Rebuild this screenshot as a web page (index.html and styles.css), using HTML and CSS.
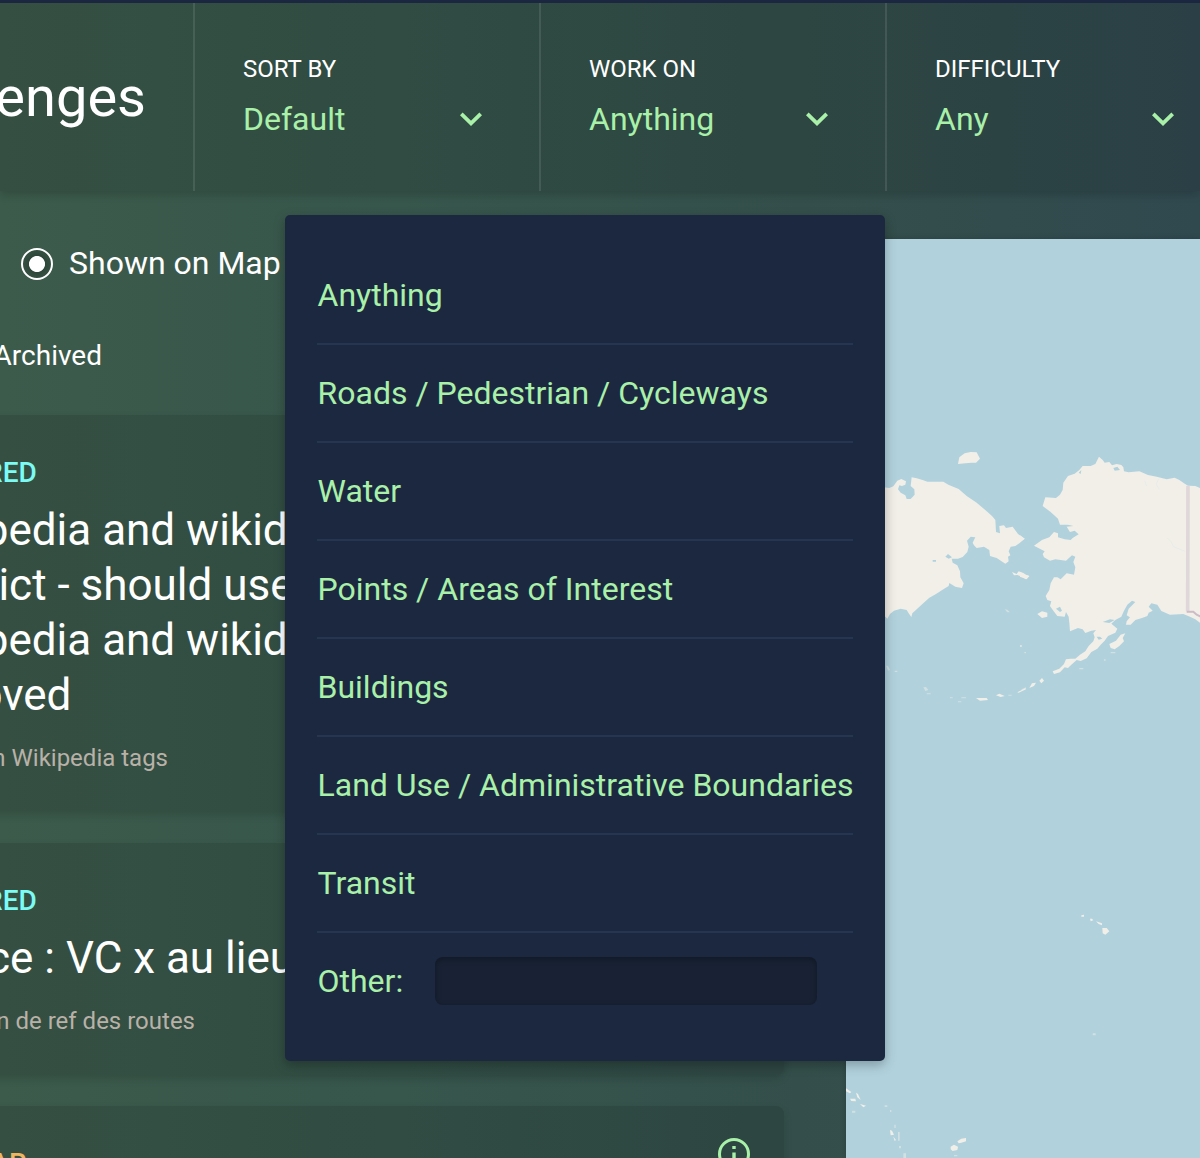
FILE: index.html
```html
<!DOCTYPE html>
<html lang="en">
<head>
<meta charset="utf-8">
<title>Find Challenges</title>
<link rel="stylesheet" href="styles.css">
</head>
<body>
<svg class="defs" aria-hidden="true">
  <symbol id="chevron" viewBox="0 0 22 14"><path d="M1.300 1.800 11 11.300 20.700 1.800" fill="none" stroke="currentColor" stroke-width="3.800"/></symbol>
</svg>
<div class="page">
  <header class="filters">
    <h1 class="filters-title">Find Challenges</h1>
    <div class="filter">
      <div class="filter-label">SORT BY</div>
      <div class="filter-value"><span>Default</span><svg class="chevron"><use href="#chevron"/></svg></div>
    </div>
    <div class="filter">
      <div class="filter-label">WORK ON</div>
      <div class="filter-value"><span>Anything</span><svg class="chevron"><use href="#chevron"/></svg></div>
    </div>
    <div class="filter">
      <div class="filter-label">DIFFICULTY</div>
      <div class="filter-value"><span>Any</span><svg class="chevron"><use href="#chevron"/></svg></div>
    </div>
  </header>
  <main class="content">
    <section class="results">
      <div class="bounds"><span class="radio"></span><span>Shown on Map</span></div>
      <div class="archived"><span>Include Archived</span></div>
      <article class="card">
        <div class="tag">FEATURED</div>
        <h2 class="card-title">Wikipedia and wikidata<br>conflict - should use<br>Wikipedia and wikidata<br>removed</h2>
        <div class="project project-wiki"><span>Problems in Wikipedia tags</span></div>
      </article>
      <article class="card card-short">
        <div class="tag">FEATURED</div>
        <h2 class="card-title">France : VC x au lieu</h2>
        <div class="project project-routes"><span>Correction de ref des routes</span></div>
      </article>
      <article class="card card-last">
        <div class="tag tag-popular">POPULAR</div>
        <svg class="info" viewBox="0 0 32 32"><circle cx="16" cy="16" r="14.500" fill="none" stroke="currentColor" stroke-width="3"/><path d="M14.300 8h3.400v3h-3.400zM14.300 14.500h3.400v10h-3.400z" fill="currentColor"/></svg>
      </article>
    </section>
    <svg class="map" viewBox="846 239 354 919">
      <g class="land" transform="translate(880 440) scale(.33333)">
        <path d="M0 140 28 144 40 139 52 122 64 117 78 124 76 134 66 138 58 136 54 148 62 158 76 166 80 177 92 177 104 164 103 148 92 138 95 112 110 115 130 121 142 125 190 125 205 134 236 147 260 168 290 188 320 214 336 228 346 240 348 276 360 280 358 258 372 256 378 264 398 260 408 274 414 282 434 296 418 310 406 318 392 320 386 334 391 346 384 350 386 364 376 371 350 354 330 348 328 330 312 320 290 324 282 316 278 308 286 292 272 290 261 302 266 320 262 336 248 351 234 356 215 356 218 368 232 376 240 394 241 412 251 430 246 444 226 440 208 429 206 438 190 448 168 462 148 473 128 491 97 520 94 531 86 520 80 510 62 506 42 512 30 522 22 536 16 530 0 530Z"/>
        <path d="M234 72 238 52 254 40 272 36 290 37 300 56 288 68 274 68 256 70Z"/>
        <path d="M396 396 410 402 416 394 430 399 438 404 448 408 438 418 426 410 412 405 402 406Z"/>
        <path class="faint" d="M374 508 382 509 390 517 382 517ZM130 742 138 741 145 750 136 753ZM18 677 24 677 30 690 24 692Z"/>
        <path class="faint" d="M140 760h12v3h-12zM44 692h8v4h-8zM210 772h8v3h-8zM244 772h14v3h-14zM234 784h10v3h-10zM385 764h10v3h-10zM420 616h6v4h-6zM433 636h5v4h-5z"/>
        <path d="M288 774 320 774 324 780 300 782ZM348 766 358 761 374 768 362 771ZM412 757 436 745 438 748 416 758Z"/>
        <path class="hole" d="M196 350 204 342 216 352 206 356ZM158 360h10v5h-10z"/>
      </g>
      <g class="land" transform="translate(1020 440) scale(.33333)">
        <path d="M237 50 248 60 254 68 268 66 276 76 290 72 304 75 310 82 312 94 326 97 358 94 384 105 410 110 440 118 464 113 478 120 492 130 504 137 526 138 545 146 545 552 526 538 510 530 490 522 450 524 424 513 412 494 394 490 386 500 398 512 386 518 382 528 366 534 346 540 332 554 318 554 320 544 330 532 320 526 326 506 346 486 336 482 322 494 312 512 304 530 286 540 274 551 292 566 286 578 264 588 254 602 242 614 232 626 214 636 200 655 182 663 170 660 154 674 144 684 134 682 120 697 102 702 98 694 118 686 132 672 138 658 152 656 166 656 180 644 196 634 206 618 220 604 224 592 220 580 228 570 214 572 196 579 188 568 174 564 150 574 148 548 146 530 138 516 134 530 112 528 100 512 90 498 94 484 82 480 77 468 88 450 92 430 102 412 112 412 122 418 140 400 162 404 166 382 160 366 166 350 156 346 138 362 106 358 90 362 72 352 68 342 74 334 42 317 66 300 88 292 102 276 114 280 114 292 134 298 152 300 158 294 176 283 164 272 150 276 140 260 160 258 144 254 120 254 114 236 92 216 68 198 76 172 108 174 120 164 128 150 130 128 144 108 164 101 178 90 188 78 212 78 226 72Z"/>
        <path class="hole" d="M280 84 292 80 300 90 284 92ZM230 590 240 590 247 596 236 599ZM248 546 270 538 284 540 268 549ZM108 506 120 500 126 512 120 516ZM176 98 184 90 182 102Z"/>
        <path d="M268 612 288 602 302 584 316 580 308 594 312 604 298 618 284 628 272 624Z"/>
        <path d="M52 522 66 514 82 518 82 530 66 534ZM0 286 14 296 0 306ZM0 396 14 404 28 408 20 418 0 410Z"/>
        <path d="M28 744 36 730 48 728 42 738ZM58 722 66 714 72 722 64 730Z"/>
        <path class="faint" d="M4 748 18 742 18 746 6 752ZM272 636h14v4h-14zM178 684h12v4h-12zM252 658h5v4h-5zM0 616h5v4H0z"/>
        <path class="river" d="M442 294 454 306 460 320 496 334M374 122 380 138M416 118 408 132 418 148"/>
        <path class="border" d="M504 137 503 514"/>
        <path class="border border-thin" d="M500 515H520L530 524 542 530"/>
      </g>
      <g class="land" transform="translate(840 880) scale(.33333)">
        <path d="M787 144 800 144 808 154 796 164 788 160ZM724 106 732 104 732 110 724 110ZM750 116 756 116 760 121 752 124ZM768 124 786 130 786 136 776 132Z"/>
        <path d="M332 800 342 794 354 800 352 810 338 813 332 808ZM352 784 364 776 378 774 378 784 364 788 356 790Z"/>
        <path d="M18 625 34 636 30 640 18 634ZM30 656 46 656 48 664 34 663ZM48 638 54 642 62 660 52 652ZM60 672 78 677 70 682ZM150 750 156 752 162 764 152 766ZM160 770 168 780 164 783Z"/>
        <path class="faint" d="M36 692h10v6h-10zM134 676h8v5h-8zM150 690h4v6h-4zM163 734h4v10h-4zM174 756h5v26h-5zM177 798h6v7h-6zM190 820h8v14h-8zM758 460h9v6h-9zM342 825h10v4h-10z"/>
      </g>
    </svg>
  </main>
  <div class="menu">
    <div class="menu-item">Anything</div>
    <div class="menu-item">Roads / Pedestrian / Cycleways</div>
    <div class="menu-item">Water</div>
    <div class="menu-item">Points / Areas of Interest</div>
    <div class="menu-item">Buildings</div>
    <div class="menu-item">Land Use / Administrative Boundaries</div>
    <div class="menu-item">Transit</div>
    <div class="menu-item"><label for="other">Other:</label><input id="other" class="menu-input" type="text"></div>
  </div>
</div>
</body>
</html>
```
FILE: styles.css
```css
* { box-sizing: border-box; }
body { margin: 0; font-family: Roboto, sans-serif; color: #fff; }
.defs { display: none; }
.page {
  position: relative;
  width: 1200px;
  height: 1158px;
  overflow: hidden;
  border-top: 3px solid #1b2740;
  background: linear-gradient(90deg, #3c5b4b 0, #37564c 400px, #344f4b 800px, #30494f 1200px);
}
.filters {
  display: flex;
  height: 188px;
  background: rgba(0, 0, 0, .115);
  box-shadow: 0 4px 8px rgba(0, 0, 0, .16);
}
.filters-title {
  display: flex;
  justify-content: flex-end;
  align-items: center;
  flex: none;
  width: 193px;
  margin: 0;
  padding-right: 47px;
  font-size: 56px;
  font-weight: 400;
  white-space: nowrap;
}
.filter {
  flex: none;
  width: 346px;
  padding: 50px 57px 0 48px;
  border-left: 2px solid rgba(255, 255, 255, .1);
}
.filter-label { font-size: 24px; line-height: 32px; }
.filter-value {
  display: flex;
  justify-content: space-between;
  align-items: center;
  height: 48px;
  margin-top: 10px;
  font-size: 32px;
  color: #a9f0a9;
}
.chevron { width: 22px; height: 14px; }
.content { display: flex; justify-content: space-between; height: 967px; }
.results { width: 784px; }
.bounds {
  display: flex;
  align-items: center;
  gap: 16px;
  height: 48px;
  margin: 49px 0 0 21px;
  font-size: 32px;
}
.bounds span:last-child { margin-top: -2px; }
.radio {
  width: 32px;
  height: 32px;
  border: 2px solid #fff;
  border-radius: 50%;
  background: radial-gradient(circle, #fff 7.600px, rgba(0, 0, 0, .22) 8.400px, rgba(0, 0, 0, .1) 14px);
}
.archived {
  display: flex;
  justify-content: flex-end;
  align-items: center;
  width: 102px;
  height: 40px;
  margin-top: 47px;
  font-size: 28px;
  white-space: nowrap;
}
.card {
  height: 396px;
  margin: 40px 0 0 -139px;
  padding: 41px 0 0 40px;
  border-radius: 8px;
  background: rgba(0, 0, 0, .115);
  box-shadow: 0 4px 8px rgba(0, 0, 0, .14);
}
.card-short { height: 232px; margin-top: 32px; }
.card-last {
  display: flex;
  justify-content: space-between;
  height: 100px;
  margin-top: 31px;
  padding: 32px 34px 0 40px;
}
.tag { font-size: 28px; line-height: 34px; font-weight: 500; color: #7bfbf3; letter-spacing: .1px; }
.tag-popular { margin-top: 9px; color: #efb65f; }
.info { width: 32px; height: 32px; color: #a9f0a9; }
.card-title {
  margin: 13px 0 0;
  font-size: 44px;
  line-height: 55px;
  font-weight: 400;
  white-space: nowrap;
}
.project {
  display: flex;
  justify-content: flex-end;
  margin-top: 19px;
  font-size: 24px;
  line-height: 32px;
  color: #b9b1a8;
  white-space: nowrap;
}
.project-wiki { width: 267px; }
.project-routes { width: 294px; }
.map { flex: none; width: 354px; height: 919px; margin-top: 48px; background: #b1d2dd; box-shadow: 0 0 6px rgba(0, 0, 0, .18); }
.land { fill: #f2efe9; filter: blur(1.500px); }
.hole { fill: #b1d2dd; }
.faint { opacity: .5; }
.river { fill: none; stroke: #e7ecea; stroke-width: 3; }
.border { fill: none; stroke: #dfd7da; stroke-width: 11; }
.border-thin { stroke: #cdbbc6; stroke-width: 6; }
.menu {
  position: absolute;
  left: 285px;
  top: 212px;
  width: 600px;
  height: 846px;
  padding: 32px;
  border-radius: 5px;
  background: #1c2840;
  box-shadow: 0 4px 12px rgba(0, 0, 0, .28);
  color: #a9f0a9;
  font-size: 32px;
}
.menu-item {
  display: flex;
  align-items: center;
  height: 98px;
  padding-left: .5px;
  border-bottom: 2px solid #263650;
  white-space: nowrap;
}
.menu-item:last-child { height: 96px; border: 0; }
.menu-input {
  width: 382px;
  height: 48px;
  margin-left: auto;
  margin-right: 36px;
  border: 0;
  border-radius: 8px;
  background: #182234;
  box-shadow: inset 0 2px 6px rgba(0, 0, 0, .3);
}
```
